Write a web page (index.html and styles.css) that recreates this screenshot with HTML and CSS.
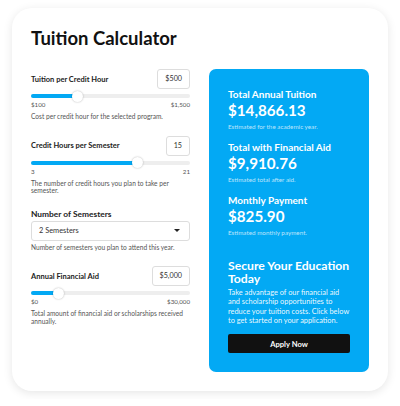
FILE: index.html
```html
<!DOCTYPE html>
<html>
<head>
<meta charset="utf-8">
<link rel="stylesheet" href="styles.css">
</head>
<body>
<div class="card">
  <h1 class="title">Tuition Calculator</h1>
  <div class="cols">
    <div class="left">
      <div class="field">
        <div class="head"><span class="label">Tuition per Credit Hour</span><span class="box">$500</span></div>
        <div class="slider"><div class="fill" style="width:29%"></div><div class="thumb" style="left:29%"></div></div>
        <div class="range"><span>$100</span><span>$1,500</span></div>
        <p class="desc">Cost per credit hour for the selected program.</p>
      </div>
      <div class="field">
        <div class="head"><span class="label">Credit Hours per Semester</span><span class="box">15</span></div>
        <div class="slider"><div class="fill" style="width:67%"></div><div class="thumb" style="left:67%"></div></div>
        <div class="range"><span>3</span><span>21</span></div>
        <p class="desc">The number of credit hours you plan to take per semester.</p>
      </div>
      <div class="field">
        <div class="label plain">Number of Semesters</div>
        <div class="select"><span>2 Semesters</span><span class="caret"></span></div>
        <p class="desc">Number of semesters you plan to attend this year.</p>
      </div>
      <div class="field">
        <div class="head"><span class="label">Annual Financial Aid</span><span class="box">$5,000</span></div>
        <div class="slider"><div class="fill" style="width:17%"></div><div class="thumb" style="left:17%"></div></div>
        <div class="range"><span>$0</span><span>$30,000</span></div>
        <p class="desc">Total amount of financial aid or scholarships received annually.</p>
      </div>
    </div>
    <div class="panel">
      <div class="stat">
        <h3>Total Annual Tuition</h3>
        <div class="amount">$14,866.13</div>
        <div class="note">Estimated for the academic year.</div>
      </div>
      <div class="stat">
        <h3>Total with Financial Aid</h3>
        <div class="amount">$9,910.76</div>
        <div class="note">Estimated total after aid.</div>
      </div>
      <div class="stat">
        <h3>Monthly Payment</h3>
        <div class="amount">$825.90</div>
        <div class="note">Estimated monthly payment.</div>
      </div>
      <h2 class="cta-title">Secure Your Education Today</h2>
      <p class="cta-text">Take advantage of our financial aid and scholarship opportunities to reduce your tuition costs. Click below to get started on your application.</p>
      <button class="btn">Apply Now</button>
    </div>
  </div>
</div>
</body>
</html>
```

FILE: styles.css
```css
* { box-sizing: border-box; }
html, body { margin: 0; padding: 0; background: #ffffff; }
body {
  font-family: "Lato", "Open Sans", sans-serif;
  color: #222;
  padding: 8px 12px;
}
.card {
  width: 376px;
  background: #fff;
  border-radius: 20px;
  box-shadow: 0 2px 10px rgba(0,0,0,0.10);
  padding: 18px 19px 19px 19px;
}
.title {
  margin: 0 0 19px 0;
  font-size: 18.5px;
  line-height: 24px;
  font-weight: 700;
  color: #111;
}
.cols {
  display: flex;
  gap: 19px;
  align-items: flex-start;
}
.left { width: 159px; }
.field { margin-bottom: 15px; }
.head {
  display: flex;
  justify-content: space-between;
  align-items: center;
  height: 20px;
}
.label {
  font-size: 7.5px;
  font-weight: 700;
  color: #222;
}
.label.plain {
  font-size: 8.4px;
  line-height: 8px;
  margin-bottom: 3px;
}
.box {
  height: 20px;
  padding: 0 7px;
  border: 1px solid #ddd;
  border-radius: 3px;
  font-size: 7.2px;
  line-height: 18px;
  color: #333;
}
.slider {
  position: relative;
  margin-top: 5px;
  height: 4px;
  border-radius: 2px;
  background: #eeeeee;
}
.fill {
  height: 4px;
  border-radius: 2px;
  background: #03a9f4;
}
.thumb {
  position: absolute;
  top: -3.5px;
  width: 11px;
  height: 11px;
  margin-left: -5.5px;
  border-radius: 50%;
  background: #fff;
  box-shadow: 0 0 2px rgba(0,0,0,0.3);
}
.range {
  display: flex;
  justify-content: space-between;
  margin-top: 3px;
  font-size: 6.2px;
  line-height: 8px;
  color: #555;
}
.desc {
  margin: 4px 0 0 0;
  font-size: 6.6px;
  line-height: 7.6px;
  color: #555;
}
.select {
  height: 20px;
  border: 1px solid #ddd;
  border-radius: 3px;
  display: flex;
  justify-content: space-between;
  align-items: center;
  padding: 0 9px 0 7px;
  font-size: 7.4px;
  color: #333;
}
.select + .desc { margin-top: 3px; }
.caret {
  width: 0;
  height: 0;
  border-left: 3px solid transparent;
  border-right: 3px solid transparent;
  border-top: 3px solid #222;
}
.panel {
  width: 160px;
  background: #03a9f4;
  border-radius: 7px;
  padding: 19px 19px 19px 19px;
  color: #fff;
}
.stat { margin-bottom: 10px; }
.stat h3 {
  margin: 0;
  font-size: 10px;
  line-height: 12px;
  font-weight: 700;
}
.amount {
  margin-top: 1px;
  font-size: 15.2px;
  line-height: 18px;
  font-weight: 700;
}
.note {
  margin-top: 4px;
  font-size: 6.3px;
  line-height: 8px;
  color: rgba(255,255,255,0.72);
}
.stat:nth-child(3) { margin-bottom: 22px; }
.cta-title {
  margin: 0 -6px 0 0;
  font-size: 12.2px;
  line-height: 13px;
  font-weight: 700;
}
.cta-text {
  margin: 3px 0 0 0;
  font-size: 7.4px;
  line-height: 9.3px;
  color: rgba(255,255,255,0.95);
}
.btn {
  display: block;
  width: 100%;
  height: 19px;
  margin-top: 9px;
  border: none;
  border-radius: 2px;
  background: #111;
  color: #fff;
  font-family: inherit;
  font-size: 7.6px;
  font-weight: 700;
  padding: 0;
}
```
